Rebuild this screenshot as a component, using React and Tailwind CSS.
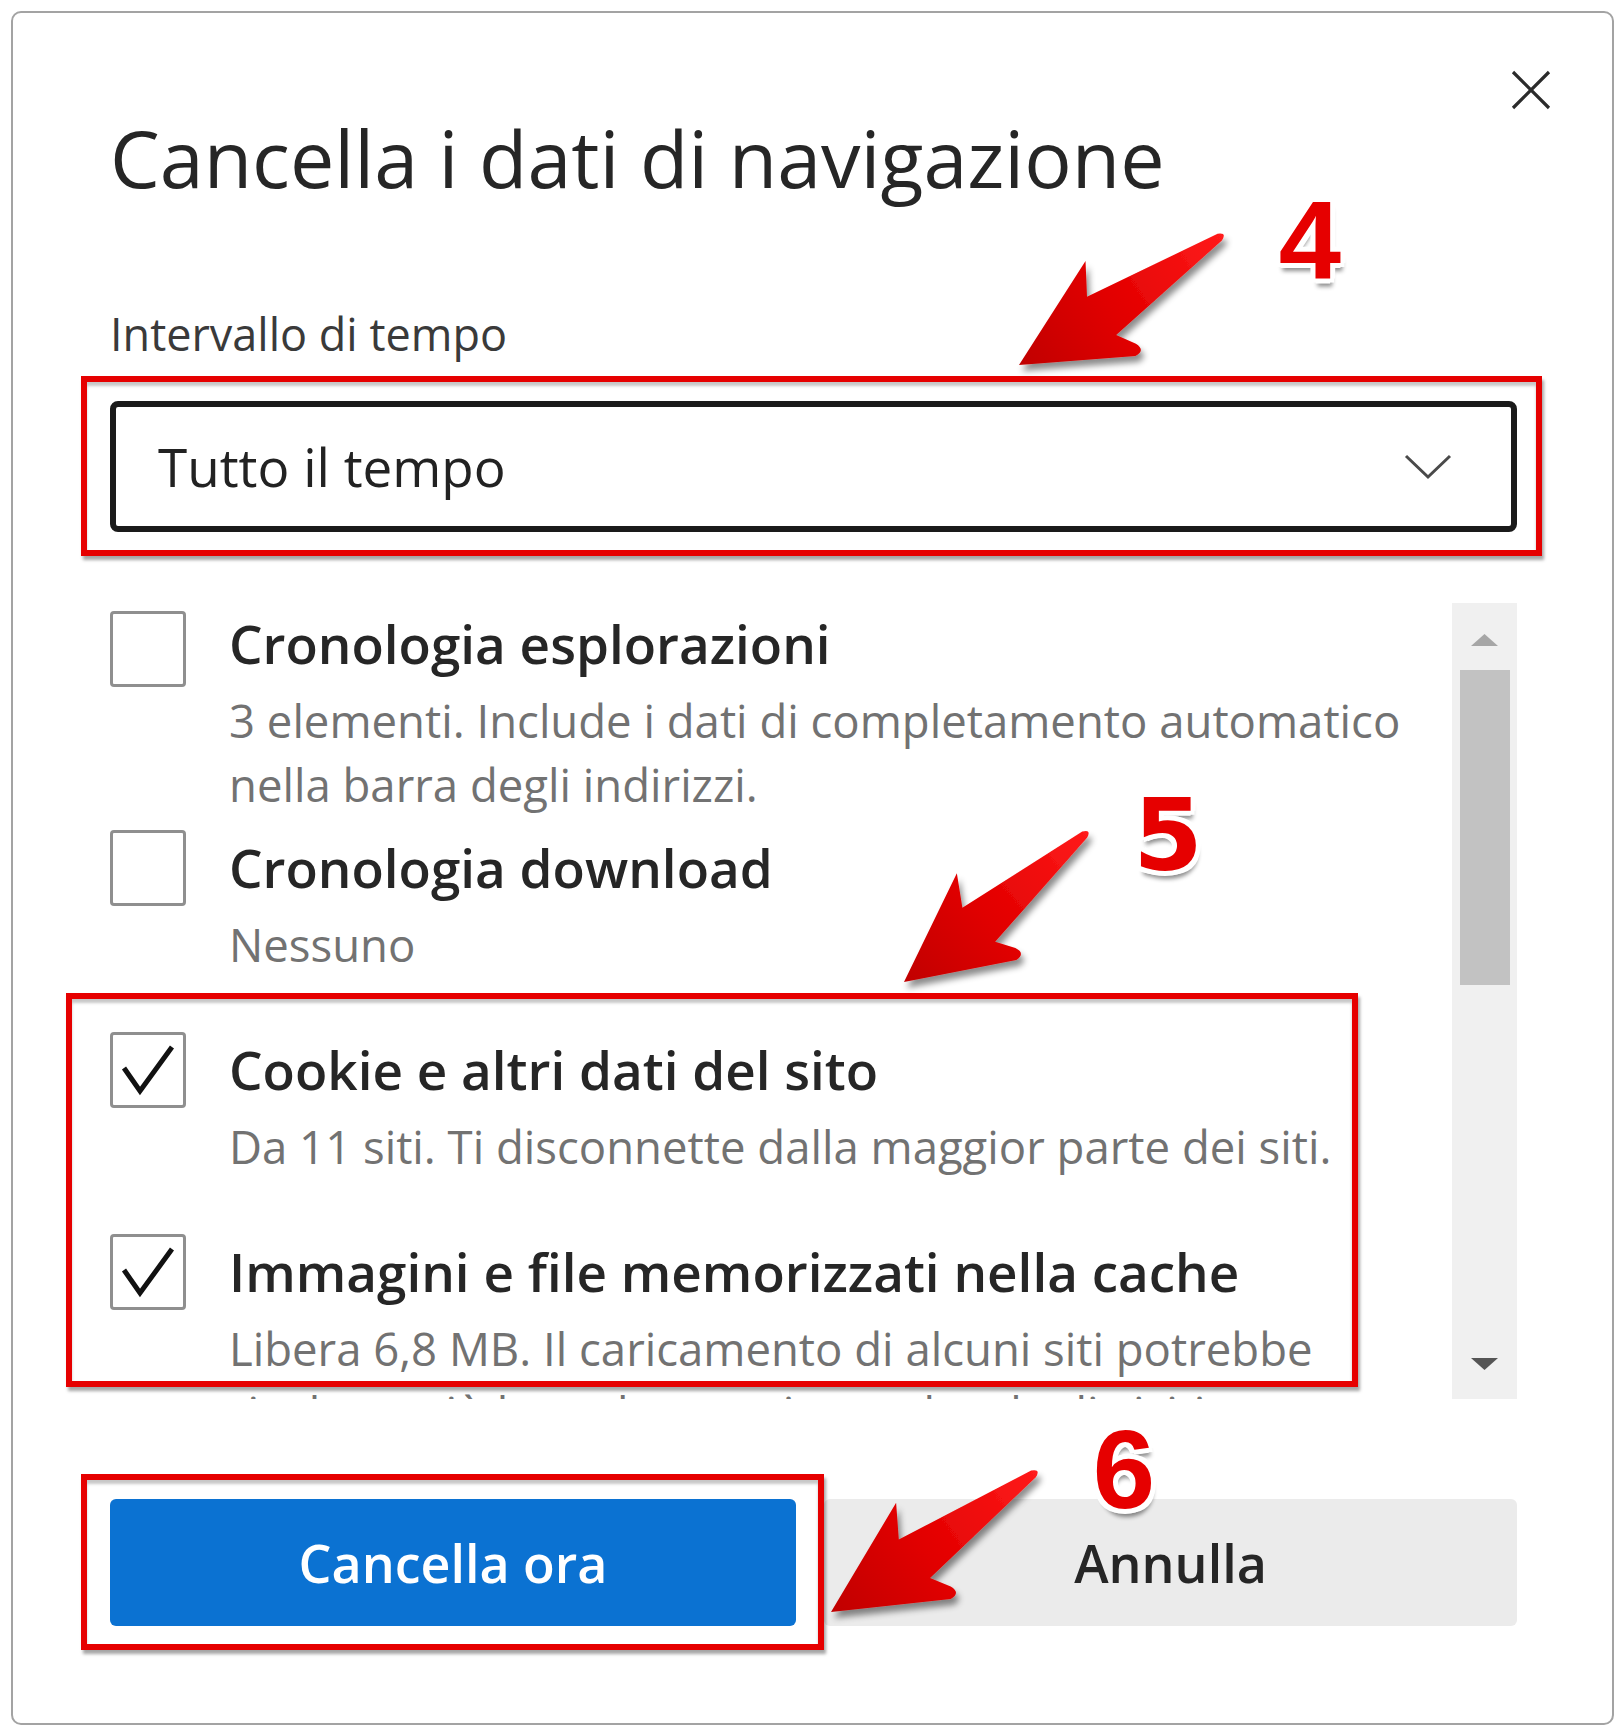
import React from 'react'

const items = [
  {
    label: 'Cronologia esplorazioni',
    lines: ['3 elementi. Include i dati di completamento automatico', 'nella barra degli indirizzi.'],
    checked: false,
    gap: 'mt-0',
    box: 'mt-[5px]',
  },
  { label: 'Cronologia download', lines: ['Nessuno'], checked: false, gap: 'mt-[14px]', box: 'mt-0' },
  {
    label: 'Cookie e altri dati del sito',
    lines: ['Da 11 siti. Ti disconnette dalla maggior parte dei siti.'],
    checked: true,
    gap: 'mt-[56px]',
    box: 'mt-0',
  },
  {
    label: 'Immagini e file memorizzati nella cache',
    lines: ['Libera 6,8 MB. Il caricamento di alcuni siti potrebbe', 'risultare più lento la prossima volta che li visiti.'],
    checked: true,
    gap: 'mt-[56px]',
    box: 'mt-0',
  },
]

function Checkbox({ checked, className }) {
  return (
    <div className={`w-[76px] h-[76px] shrink-0 border-[3px] border-[#8f8f8f] rounded-[4px] bg-white ${className}`}>
      {checked && (
        <svg viewBox="0 0 70 70" className="w-full h-full">
          <path d="M11 33 L27 56 L59 12" fill="none" stroke="#111" strokeWidth="5" strokeLinejoin="miter" />
        </svg>
      )}
    </div>
  )
}

function Item({ item }) {
  return (
    <div className={`flex items-start ${item.gap}`}>
      <Checkbox checked={item.checked} className={item.box} />
      <div className="ml-[43px]">
        <div className="text-[53px] leading-[76px] font-semibold text-[#262626] whitespace-nowrap">{item.label}</div>
        <div className="mt-[6px] text-[45.5px] leading-[64px] text-[#727272]">
          {item.lines.map((l) => (
            <div key={l} className="whitespace-nowrap">{l}</div>
          ))}
        </div>
      </div>
    </div>
  )
}

function Arrow({ x, y, angle, scale }) {
  return (
    <g filter="url(#arrowShadow)">
      <g transform={`translate(${x} ${y}) rotate(${angle}) scale(${scale})`}>
        <path
          d="M0 0 L112 -52 L94 -21 L238 -4 Q247 0 238 4 L98 27 L110 45 Q115 56 103 55 Z"
          fill="url(#arrowFill)"
        />
      </g>
    </g>
  )
}

function Num({ children, className, font }) {
  return (
    <div className={`absolute flex items-center justify-center w-[120px] h-[110px] ${className}`}>
      <span
        className={`${font} font-bold leading-none text-[#e60000] [text-shadow:-4px_-4px_0_#fff,4px_-4px_0_#fff,-4px_4px_0_#fff,4px_4px_0_#fff,0_-5px_0_#fff,0_5px_0_#fff,-5px_0_0_#fff,5px_0_0_#fff,2px_8px_4px_rgba(0,0,0,0.45)]`}
      >
        {children}
      </span>
    </div>
  )
}

export default function App() {
  return (
    <div className="relative w-[1624px] h-[1734px] bg-white overflow-hidden font-['Open_Sans','Noto_Sans',sans-serif]">
      <div className="relative ml-[11px] mt-[11px] w-[1603px] h-[1714px] border-2 border-[#a3a3a3] rounded-[10px] bg-white pl-[97px] pr-[95px] pt-[105px]">
        <button className="absolute right-[61px] top-[57px] w-[40px] h-[40px]">
          <svg viewBox="0 0 40 40" className="w-full h-full">
            <path d="M2 2 L38 38 M38 2 L2 38" stroke="#2b2b2b" strokeWidth="3.2" />
          </svg>
        </button>

        <h1 className="text-[79px] leading-none font-medium text-[#262626] whitespace-nowrap">Cancella i dati di navigazione</h1>

        <div className="mt-[114px] text-[45px] leading-none text-[#3a3a3a]">Intervallo di tempo</div>

        <div className="mt-[45px] h-[131px] border-[6px] border-[#1a1a1a] rounded-[8px] flex items-center justify-between pl-[42px] pr-[59px]">
          <span className="text-[53px] leading-none text-[#222]">Tutto il tempo</span>
          <svg width="48" height="26" viewBox="0 0 48 26">
            <path d="M2 2 L24 23 L46 2" fill="none" stroke="#4a4a4a" strokeWidth="3" />
          </svg>
        </div>

        <div className="mt-[71px] h-[796px] flex">
          <div className="flex-1 overflow-hidden pt-[3px]">
            {items.map((it) => (
              <Item key={it.label} item={it} />
            ))}
          </div>
          <div className="w-[65px] h-full bg-[#f0f0f0] flex flex-col items-center">
            <div className="h-[67px] flex items-center justify-center pt-[6px]">
              <svg width="27" height="12" viewBox="0 0 27 12">
                <polygon points="0,12 13.5,0 27,12" fill="#a6a6a6" />
              </svg>
            </div>
            <div className="w-[50px] h-[315px] bg-[#c2c2c2]" />
            <div className="flex-1" />
            <div className="h-[70px] flex items-center justify-center">
              <svg width="27" height="12" viewBox="0 0 27 12">
                <polygon points="0,0 27,0 13.5,12" fill="#555" />
              </svg>
            </div>
          </div>
        </div>

        <div className="mt-[100px] flex gap-[28px]">
          <button className="w-[686px] h-[127px] rounded-[6px] bg-[#0b72d2] text-white text-[52px] font-semibold leading-none">
            Cancella ora
          </button>
          <button className="flex-1 h-[127px] rounded-[6px] bg-[#ebebeb] text-[#262626] text-[52px] font-semibold leading-none">
            Annulla
          </button>
        </div>
      </div>

      {/* annotation boxes */}
      <div className="absolute left-[81px] top-[376px] w-[1461px] h-[180px] border-[6px] border-[#e60000] shadow-[2px_4px_3px_rgba(0,0,0,0.35),inset_0_4px_3px_rgba(0,0,0,0.22)]" />
      <div className="absolute left-[66px] top-[993px] w-[1292px] h-[394px] border-[6px] border-[#e60000] shadow-[2px_4px_3px_rgba(0,0,0,0.35),inset_0_4px_3px_rgba(0,0,0,0.22)]" />
      <div className="absolute left-[81px] top-[1474px] w-[743px] h-[176px] border-[6px] border-[#e60000] shadow-[2px_4px_3px_rgba(0,0,0,0.35),inset_0_4px_3px_rgba(0,0,0,0.22)]" />

      <svg className="absolute left-0 top-0 pointer-events-none" width="1624" height="1734">
        <defs>
          <linearGradient id="arrowFill" gradientUnits="userSpaceOnUse" x1="0" y1="0" x2="240" y2="0">
            <stop offset="0" stopColor="#c00000" />
            <stop offset="0.45" stopColor="#e10000" />
            <stop offset="1" stopColor="#ff1a1a" />
          </linearGradient>
          <filter id="arrowShadow" x="-20%" y="-20%" width="150%" height="150%">
            <feDropShadow dx="3" dy="6" stdDeviation="3" floodColor="#000" floodOpacity="0.45" />
          </filter>
        </defs>
        <Arrow x={1019} y={365} angle={-32.5} scale={1} />
        <Arrow x={904} y={982} angle={-39.2} scale={0.98} />
        <Arrow x={831} y={1612} angle={-34.3} scale={1.03} />
      </svg>

      <Num className="left-[1250px] top-[186px]" font="font-['Liberation_Sans',Arial,sans-serif] text-[112px]">4</Num>
      <Num className="left-[1108px] top-[781px]" font="font-['DejaVu_Sans',Verdana,sans-serif] text-[100px]">5</Num>
      <Num className="left-[1064px] top-[1415px]" font="font-['Liberation_Sans',Arial,sans-serif] text-[112px]">6</Num>
    </div>
  )
}
